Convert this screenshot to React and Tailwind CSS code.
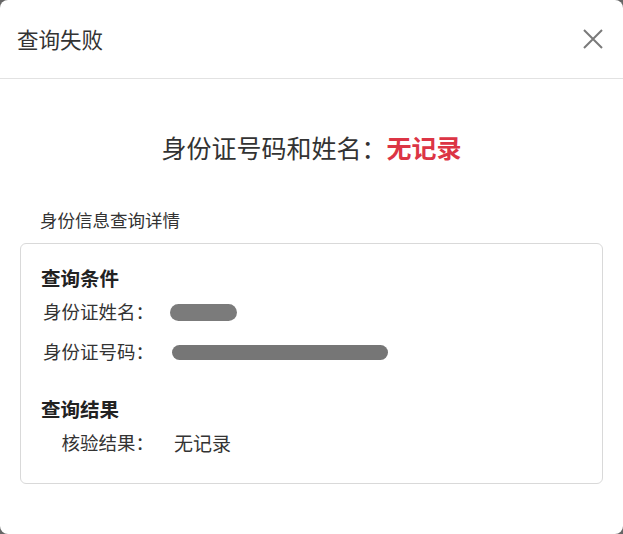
export default function App() {
  const font = { fontFamily: '"Noto Sans CJK SC", "Noto Sans", sans-serif' }
  return (
    <div className="w-[623px] h-[534px] bg-[#666666]" style={font}>
      <div className="h-full bg-white rounded-[8px] flex flex-col">
        {/* Header */}
        <div className="h-[79px] shrink-0 flex items-center justify-between pl-[17px] pr-[19px] border-b border-[#e2e2e2]">
          <h5 className="text-[21.5px] leading-[30px] text-[#333333]">查询失败</h5>
          <button className="w-[22px] h-[22px] flex items-center justify-center">
            <svg width="22" height="22" viewBox="0 0 22 22" fill="none" stroke="#7a7a7a" strokeWidth="2">
              <path d="M2 2 L20 20 M20 2 L2 20" />
            </svg>
          </button>
        </div>

        {/* Body */}
        <div className="px-5 pt-[52px]">
          <p className="text-center text-[25px] leading-[33px] text-[#333333]">
            身份证号码和姓名：<span className="font-bold text-[#dc3545]">无记录</span>
          </p>

          <p className="mt-[44px] pl-5 text-[17.5px] leading-[24px] text-[#333333]">身份信息查询详情</p>

          <div className="mt-[11px] border border-[#d9d9d9] rounded-[6px] px-5 pt-5 pb-5">
            <h6 className="text-[19.5px] leading-[28px] font-bold text-[#222222]">查询条件</h6>
            <Row label="身份证姓名：">
              <div className="ml-[-4px] w-[67px] h-[17px] rounded-full bg-[#7b7b7b] blur-[0.6px]" />
            </Row>
            <Row label="身份证号码：">
              <div className="ml-[-2px] w-[216px] h-[15px] rounded-full bg-[#767676] blur-[0.6px]" />
            </Row>
            <h6 className="mt-[23px] text-[19.5px] leading-[28px] font-bold text-[#222222]">查询结果</h6>
            <Row label="核验结果：">
              <span className="text-[19px] text-[#333333]">无记录</span>
            </Row>
          </div>
        </div>
      </div>
    </div>
  )
}

function Row({ label, children }) {
  return (
    <div className="h-[40px] flex items-center">
      <span className="w-[113px] text-right text-[18.5px] text-[#333333]">{label}</span>
      <div className="ml-5 flex items-center">{children}</div>
    </div>
  )
}
